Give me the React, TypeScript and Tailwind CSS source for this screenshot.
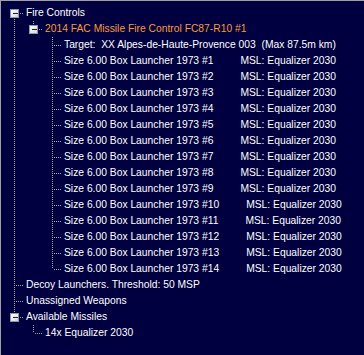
import React from "react";

type TreeRow = {
  text: string;
  level: number;
  guides: boolean[];
  top: boolean;
  bottom: boolean;
  box?: boolean;
  orange?: boolean;
  msl?: string;
};

const launchers: TreeRow[] = Array.from({ length: 14 }, (_, i) => ({
  text: `Size 6.00 Box Launcher 1973 #${i + 1}`,
  level: 2,
  guides: [true, false],
  top: true,
  bottom: i < 13,
  msl: "MSL: Equalizer 2030",
}));

const rows: TreeRow[] = [
  { text: "Fire Controls", level: 0, guides: [], top: false, bottom: true, box: true },
  {
    text: "2014 FAC Missile Fire Control FC87-R10 #1",
    level: 1,
    guides: [true],
    top: true,
    bottom: false,
    box: true,
    orange: true,
  },
  {
    text: "Target:  XX Alpes-de-Haute-Provence 003  (Max 87.5m km)",
    level: 2,
    guides: [true, false],
    top: true,
    bottom: true,
  },
  ...launchers,
  { text: "Decoy Launchers. Threshold: 50 MSP", level: 0, guides: [], top: true, bottom: true },
  { text: "Unassigned Weapons", level: 0, guides: [], top: true, bottom: true },
  { text: "Available Missiles", level: 0, guides: [], top: true, bottom: false, box: true },
  { text: "14x Equalizer 2030", level: 1, guides: [false], top: true, bottom: false },
];

const LINE = "#a4a4a4";

// dotted tree lines + expand box for one row
const TreeLines = ({ row }: { row: TreeRow }) => {
  const w = 19 * (row.level + 1);
  const cx = 19 * row.level + 9.5;
  return (
    <svg width={w} height={16} className="shrink-0" shapeRendering="crispEdges">
      <g stroke={LINE} strokeWidth={1} strokeDasharray="1 1">
        {row.guides.map((g, j) =>
          g ? <line key={j} x1={19 * j + 9.5} y1={0} x2={19 * j + 9.5} y2={16} /> : null
        )}
        {row.top && <line x1={cx} y1={0} x2={cx} y2={8} />}
        {row.bottom && <line x1={cx} y1={8} x2={cx} y2={16} />}
        <line x1={cx + 1} y1={8.5} x2={w} y2={8.5} />
      </g>
      {row.box && (
        <g>
          <defs>
            <linearGradient id="boxfill" x1="0" y1="0" x2="1" y2="1">
              <stop offset="0" stopColor="#ffffff" />
              <stop offset="1" stopColor="#d2d6de" />
            </linearGradient>
          </defs>
          <rect
            x={cx - 4}
            y={4.5}
            width={8}
            height={8}
            fill="url(#boxfill)"
            stroke="#8c97aa"
          />
          <line x1={cx - 2} y1={8.5} x2={cx + 3} y2={8.5} stroke="#222" />
        </g>
      )}
    </svg>
  );
};

export default function App() {
  return (
    <div
      className="w-[364px] h-[355px] bg-[#000040] border-t border-l border-[#a0a0a0] overflow-hidden"
      style={{ fontFamily: '"Liberation Sans", Arial, sans-serif' }}
    >
      <div className="flex flex-col pl-[4px] pt-[4px] text-[10.3px] leading-4">
        {rows.map((row, i) => (
          <div key={i} className="flex h-4 items-center">
            <TreeLines row={row} />
            <span
              className={`ml-[2px] whitespace-pre ${
                row.orange ? "text-[#f89b3a]" : "text-white"
              }`}
            >
              {row.text}
            </span>
            {row.msl && (
              <span className="ml-[27px] whitespace-pre text-white">{row.msl}</span>
            )}
          </div>
        ))}
      </div>
    </div>
  );
}
